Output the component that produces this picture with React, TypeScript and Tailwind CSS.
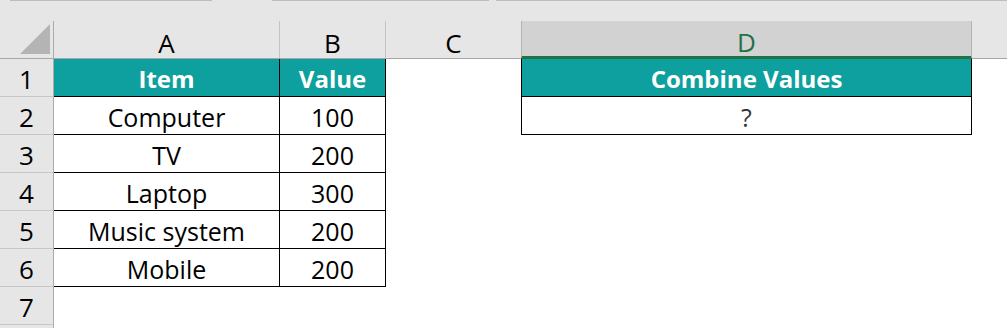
import React from "react";

type Row = {
  n: number;
  item?: string;
  value?: string;
  combine?: string;
  head?: boolean;
  inTable?: boolean;
  inD?: boolean;
};

const rows: Row[] = [
  { n: 1, item: "Item", value: "Value", combine: "Combine Values", head: true, inTable: true, inD: true },
  { n: 2, item: "Computer", value: "100", combine: "?", inTable: true, inD: true },
  { n: 3, item: "TV", value: "200", inTable: true },
  { n: 4, item: "Laptop", value: "300", inTable: true },
  { n: 5, item: "Music system", value: "200", inTable: true },
  { n: 6, item: "Mobile", value: "200", inTable: true },
  { n: 7 },
];

const font = { fontFamily: '"Open Sans", "Noto Sans", sans-serif' };

function ColHead({ label, last }: { label: string; last?: boolean }) {
  return (
    <div
      className={`h-[38px] bg-[#e6e6e6] border-b border-b-[#a6a6a6] flex items-center justify-center pt-[6px] text-[26px] text-black ${
        last ? "" : "border-r border-r-[#c3c3c3]"
      }`}
    >
      {label}
    </div>
  );
}

function cellTone(head?: boolean) {
  return head ? "bg-[#0ea09e] text-white font-bold text-[24px]" : "text-black text-[25px]";
}

export default function App() {
  return (
    <div className="w-[1007px] h-[328px] overflow-hidden bg-white" style={font}>
      {/* strip above the column headings */}
      <div className="h-[21px] bg-[#e6e6e6] flex items-start">
        <div className="ml-[10px] w-[202px] h-px bg-[#bdbdbd]" />
        <div className="ml-[60px] w-[217px] h-px bg-[#bdbdbd]" />
        <div className="ml-[7px] flex-1 h-px bg-[#bdbdbd]" />
      </div>

      <div className="grid grid-cols-[54px_226px_106px_135px_451px_1fr] leading-none">
        {/* select-all corner */}
        <div className="h-[38px] bg-[#e6e6e6] border-r border-r-[#ababab] border-b border-b-[#a6a6a6] relative">
          <svg className="absolute left-0 top-0" width="53" height="37" viewBox="0 0 53 37">
            <polygon points="20,33 50,33 50,3" fill="#b4b4b4" />
          </svg>
        </div>
        <ColHead label="A" />
        <ColHead label="B" />
        <ColHead label="C" last />
        <div className="h-[38px] bg-[#d2d2d2] border-l border-r border-[#b3b3b3] border-b-[3px] border-b-[#217346] flex items-center justify-center pt-[7px] text-[26px] text-[#217346]">
          D
        </div>
        <div className="h-[38px] bg-[#e6e6e6] border-b border-b-[#a6a6a6]" />

        {rows.map((r) => (
          <React.Fragment key={r.n}>
            <div className="h-[38px] bg-[#e6e6e6] border-r border-r-[#ababab] border-b border-b-[#c6c6c6] flex items-center justify-center pt-[2px] text-[26px] text-black">
              {r.n}
            </div>
            {r.inTable ? (
              <>
                <div
                  className={`h-[38px] border-r border-b border-black flex items-center justify-center pt-[3px] ${cellTone(
                    r.head
                  )}`}
                >
                  {r.item}
                </div>
                <div
                  className={`h-[38px] border-r border-b border-black flex items-center justify-center pt-[3px] ${cellTone(
                    r.head
                  )}`}
                >
                  {r.value}
                </div>
              </>
            ) : (
              <>
                <div className="h-[38px]" />
                <div className="h-[38px]" />
              </>
            )}
            <div className="h-[38px]" />
            {r.inD ? (
              <div
                className={`h-[38px] border-l border-r border-b border-black flex items-center justify-center pt-[3px] ${
                  r.head ? "bg-[#0ea09e] text-white font-bold text-[24px]" : "text-[#333333] text-[25px]"
                }`}
              >
                {r.combine}
              </div>
            ) : (
              <div className="h-[38px]" />
            )}
            <div className="h-[38px]" />
          </React.Fragment>
        ))}

        {/* top edge of row 8, mostly out of view */}
        <div className="h-[38px] bg-[#e6e6e6] border-r border-r-[#ababab]" />
      </div>
    </div>
  );
}
